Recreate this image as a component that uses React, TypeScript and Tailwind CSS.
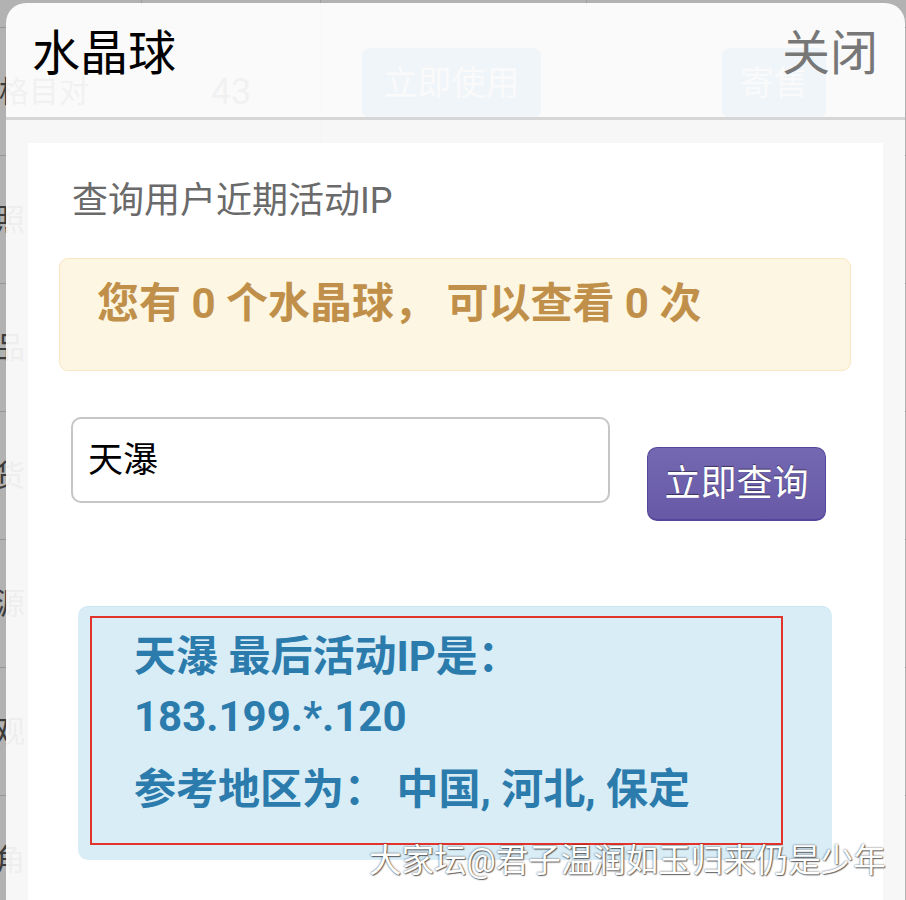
import React from "react";

const rows = [
  { name: "", first: false },
  { name: "资格目对", first: true },
  { name: "鉴照", first: false },
  { name: "商品", first: false },
  { name: "发货", first: false },
  { name: "资源", first: false },
  { name: "宏观", first: false },
  { name: "八角", first: false },
];

function BackgroundPage() {
  return (
    <div className="flex flex-col -mt-[100px]">
      {rows.map((r, i) => (
        <div key={i} className="flex h-[128px] shrink-0 border-b border-[#d9d9d9]">
          <div
            className={
              r.first
                ? "flex w-[142px] shrink-0 items-center justify-end overflow-hidden border-r border-[#e3e3e3] pr-[52px] text-[30px] leading-none text-[#555] whitespace-nowrap"
                : "flex w-[142px] shrink-0 items-center justify-end overflow-hidden border-r border-[#e3e3e3] pr-[116px] text-[30px] leading-none text-[#555] whitespace-nowrap"
            }
          >
            {r.name}
          </div>
          <div className="flex w-[179px] shrink-0 items-center justify-center border-r border-[#e3e3e3] text-[36px] leading-none text-[#555] font-['Roboto',sans-serif]">
            {r.first ? "43" : ""}
          </div>
          <div className="flex w-[266px] shrink-0 items-start justify-start border-r border-[#e3e3e3] pl-[41px] pt-[20px]">
            {r.first && (
              <div className="flex h-[70px] w-[179px] items-center justify-center rounded-[8px] bg-[#3b9cf0] text-[34px] leading-none text-white">
                立即使用
              </div>
            )}
          </div>
          <div className="flex flex-1 items-start pl-[135px] pt-[20px]">
            {r.first && (
              <div className="flex h-[70px] w-[104px] items-center justify-center rounded-[8px] bg-[#3b9cf0] text-[34px] leading-none text-white">
                寄售
              </div>
            )}
          </div>
        </div>
      ))}
    </div>
  );
}

export default function App() {
  return (
    <div className="relative h-[900px] w-[906px] overflow-hidden bg-white font-['Roboto','Noto_Sans_CJK_SC',sans-serif]">
      <BackgroundPage />
      <div className="absolute inset-0 bg-black/30" />

      {/* modal */}
      <div className="absolute left-[6px] right-[1px] top-[3px] bottom-0 flex flex-col overflow-hidden rounded-t-[20px]">
        <div className="flex h-[114px] shrink-0 items-start justify-between bg-white/[0.93] pl-[26px] pr-[27px] pt-[27px]">
          <div className="text-[48px] leading-none text-black">水晶球</div>
          <div className="text-[48px] leading-none text-[#777]">关闭</div>
        </div>
        <div className="h-[3px] shrink-0 bg-[#d6d6d6]" />
        <div className="flex flex-1 flex-col bg-[#fcfcfc]/[0.93] px-[22px] pt-[23px]">
          <div className="flex flex-1 flex-col bg-white">
            <div className="ml-[44px] mt-[40px] text-[36px] leading-none text-[#6a6a6a]">
              查询用户近期活动IP
            </div>

            <div className="ml-[31px] mt-[39px] h-[113px] w-[792px] rounded-[9px] border border-[#f8e6c2] bg-[#fdf6e3] pl-[37px] pt-[24px]">
              <div className="text-[42px] font-bold leading-none whitespace-pre text-[#c0904a]">
                您有 0 个水晶球， 可以查看 0 次
              </div>
            </div>

            <div className="mt-[46px] flex items-start">
              <div className="ml-[43px] flex h-[86px] w-[539px] items-center rounded-[10px] border-2 border-[#c6c6c6] bg-white pl-[15px] text-[35px] leading-none text-black">
                天瀑
              </div>
              <div className="ml-[37px] mt-[30px] flex h-[74px] w-[179px] items-center justify-center rounded-[10px] border border-b-2 border-[#54469a] bg-linear-to-b from-[#7568b2] to-[#6759a6] text-[36px] leading-none text-white [text-shadow:0_-1px_1px_rgba(0,0,0,0.45)]">
                立即查询
              </div>
            </div>

            <div className="ml-[50px] mt-[85px] h-[254px] w-[754px] rounded-[10px] border-t border-[#c9e6f3] bg-[#d9edf7] pl-[12px] pt-[9px]">
              <div className="h-[229px] w-[693px] border-2 border-[#e2332c] pl-[42px] pt-[9px] text-[42px] font-bold text-[#2b7bac]">
                <p className="leading-[60px]">
                  天瀑 最后活动IP是：
                  <br />
                  183.199.*.120
                </p>
                <p className="mt-[13px] leading-[60px] whitespace-pre">参考地区为： 中国, 河北, 保定</p>
              </div>
            </div>
          </div>
        </div>
      </div>

      {/* watermark */}
      <div className="absolute left-[369px] top-[845px] text-[32.5px] leading-none text-white whitespace-nowrap [text-shadow:0_0_2px_rgba(0,0,0,0.7),1px_1px_1px_rgba(0,0,0,0.5)]">
        大家坛@君子温润如玉归来仍是少年
      </div>
    </div>
  );
}
